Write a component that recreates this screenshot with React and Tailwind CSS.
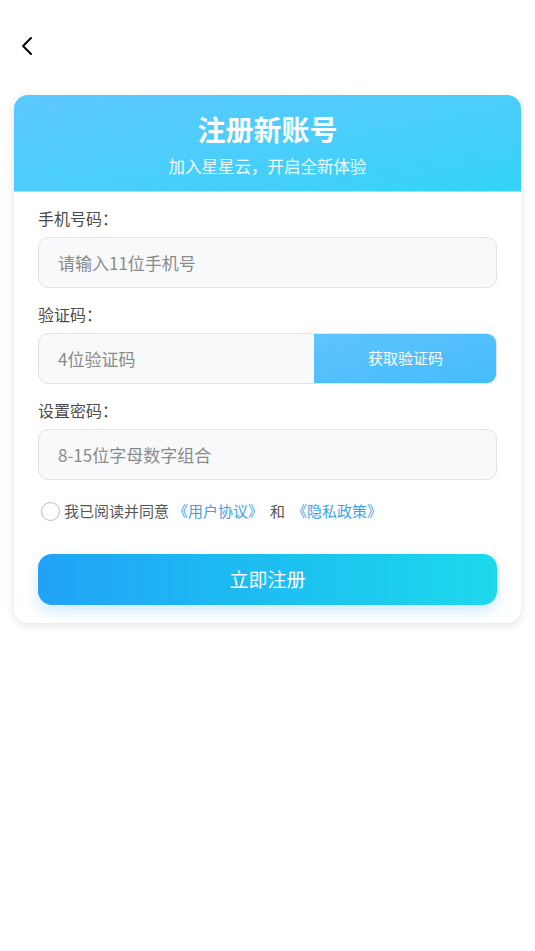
import { ChevronLeft } from "lucide-react";

const font = {
  fontFamily: '"Noto Sans CJK SC", "Noto Sans", Roboto, sans-serif',
};

function Field({ label, placeholder, children }) {
  return (
    <div className="flex flex-col">
      <label className="text-[16px] leading-[20px] text-[#4a4a4a]">{label}</label>
      {children || (
        <div className="mt-[9px] h-[51px] flex items-center rounded-[10px] border border-[#e1e3e7] bg-[#f8f9fb] px-[19px]">
          <span className="text-[17px] text-[#8a8a8a]">{placeholder}</span>
        </div>
      )}
    </div>
  );
}

export default function App() {
  return (
    <div className="min-h-[951px] w-full bg-white" style={font}>
      {/* ================= TOP BAR ================= */}
      <div className="h-[95px] pl-[11px] pt-[30px]">
        <ChevronLeft size={32} strokeWidth={1.5} className="text-black" />
      </div>

      {/* ================= CARD ================= */}
      <div className="mx-[14px] overflow-hidden rounded-[14px] bg-white shadow-[0_2px_10px_rgba(0,0,0,0.12)]">
        <div className="flex h-[97px] flex-col items-center border-b border-[#9fe4fb] bg-gradient-to-br from-[#5cc7ff] to-[#33d3f8] pt-[15px]">
          <h1 className="text-[28px] font-bold leading-[38px] text-white">注册新账号</h1>
          <p className="mt-[7px] text-[16.5px] leading-[22px] text-white/90">加入星星云，开启全新体验</p>
        </div>

        <div className="flex flex-col px-[24px] pt-[16px] pb-[18px]">
          <Field label="手机号码：" placeholder="请输入11位手机号" />

          <div className="mt-[16px]">
            <Field label="验证码：">
              <div className="mt-[9px] flex h-[51px] overflow-hidden rounded-[10px] border border-[#e1e3e7] bg-[#f8f9fb]">
                <div className="flex flex-1 items-center px-[19px]">
                  <span className="text-[17px] text-[#8a8a8a]">4位验证码</span>
                </div>
                <button className="-my-px -mr-px w-[183px] rounded-r-[10px] bg-gradient-to-br from-[#5ec4ff] to-[#44bcf9] text-[15px] text-white">
                  获取验证码
                </button>
              </div>
            </Field>
          </div>

          <div className="mt-[16px]">
            <Field label="设置密码：" placeholder="8-15位字母数字组合" />
          </div>

          <div className="mt-[21px] flex items-center pl-[3px] text-[15px] leading-[20px]">
            <span className="mr-[4px] h-[19px] w-[19px] rounded-full border border-[#bdbdbd] bg-white" />
            <span className="text-[#555]">我已阅读并同意</span>
            <span className="ml-[4px] text-[#3da2ea]">《用户协议》</span>
            <span className="mx-[7px] text-[#555]">和</span>
            <span className="text-[#3da2ea]">《隐私政策》</span>
          </div>

          <button className="mt-[33px] h-[51px] rounded-[14px] bg-gradient-to-r from-[#22a2f6] to-[#1dd9eb] text-[19px] text-white shadow-[0_6px_14px_rgba(34,162,246,0.22)]">
            立即注册
          </button>
        </div>
      </div>
    </div>
  );
}
